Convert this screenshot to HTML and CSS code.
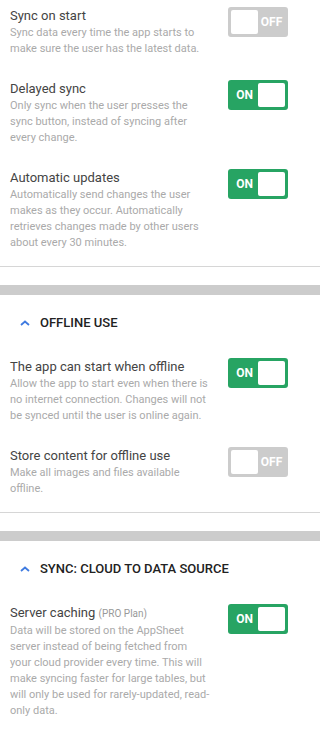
FILE: index.html
```html
<html>

<head>
    <link rel="stylesheet" href="styles.css">
</head>

<body>
    <div class="section first">
        <div class="setting">
            <div class="info">
                <div class="title">Sync on start</div>
                <div class="desc">Sync data every time the app starts to make sure the user has the latest data.</div>
            </div>
            <div class="toggle off"><span class="knob"></span><span class="label">OFF</span></div>
        </div>
        <div class="setting">
            <div class="info">
                <div class="title">Delayed sync</div>
                <div class="desc">Only sync when the user presses the sync button, instead of syncing after every change.</div>
            </div>
            <div class="toggle on"><span class="label">ON</span><span class="knob"></span></div>
        </div>
        <div class="setting">
            <div class="info">
                <div class="title">Automatic updates</div>
                <div class="desc">Automatically send changes the user makes as they occur. Automatically retrieves changes made by other users about every 30 minutes.</div>
            </div>
            <div class="toggle on"><span class="label">ON</span><span class="knob"></span></div>
        </div>
    </div>

    <div class="section">
        <div class="header">
            <svg class="chevron" width="10" height="6" viewBox="0 0 10 6"><path d="M1 5 L5 1.5 L9 5" fill="none" stroke="#3f7be0" stroke-width="1.8"/></svg>
            OFFLINE USE
        </div>
        <div class="setting">
            <div class="info">
                <div class="title">The app can start when offline</div>
                <div class="desc">Allow the app to start even when there is no internet connection. Changes will not be synced until the user is online again.</div>
            </div>
            <div class="toggle on"><span class="label">ON</span><span class="knob"></span></div>
        </div>
        <div class="setting">
            <div class="info">
                <div class="title">Store content for offline use</div>
                <div class="desc">Make all images and files available offline.</div>
            </div>
            <div class="toggle off"><span class="knob"></span><span class="label">OFF</span></div>
        </div>
    </div>

    <div class="section last">
        <div class="header">
            <svg class="chevron" width="10" height="6" viewBox="0 0 10 6"><path d="M1 5 L5 1.5 L9 5" fill="none" stroke="#3f7be0" stroke-width="1.8"/></svg>
            SYNC: CLOUD TO DATA SOURCE
        </div>
        <div class="setting">
            <div class="info">
                <div class="title">Server caching <span class="plan">(PRO Plan)</span></div>
                <div class="desc">Data will be stored on the AppSheet server instead of being fetched from your cloud provider every time. This will make syncing faster for large tables, but will only be used for rarely-updated, read-only data.</div>
            </div>
            <div class="toggle on"><span class="label">ON</span><span class="knob"></span></div>
        </div>
    </div>
</body>

</html>
```

FILE: styles.css
```css
body {
    margin: 0;
    font-family: Roboto, "Noto Sans", sans-serif;
    background-color: #ffffff;
}

.section {
    border-top: 10px solid #cccccc;
    border-bottom: 1px solid #d6d6d6;
    margin-bottom: 18px;
}

.section.first {
    border-top: none;
}

.section.last {
    border-bottom: none;
}

.header {
    display: flex;
    align-items: center;
    padding: 18px 0 20px 20px;
    height: 18px;
    font-size: 13px;
    font-weight: 500;
    color: #222222;
}

.chevron {
    margin-right: 10px;
    margin-top: 1px;
}

.setting {
    display: flex;
    align-items: flex-start;
    padding: 7px 0 16px 10px;
}

.setting:last-child {
    padding-bottom: 15px;
}

.info {
    width: 200px;
    margin-right: 18px;
}

.title {
    font-size: 13px;
    line-height: 18px;
    color: #444444;
}

.plan {
    font-size: 10px;
    color: #999999;
}

.desc {
    font-size: 11px;
    line-height: 16px;
    color: #aaaaaa;
}

.toggle {
    display: flex;
    align-items: center;
    width: 60px;
    height: 30px;
    padding: 3px;
    box-sizing: border-box;
    border-radius: 3px;
    flex-shrink: 0;
}

.toggle.on {
    background-color: #27a463;
}

.toggle.off {
    background-color: #cccccc;
}

.knob {
    width: 27px;
    height: 24px;
    border-radius: 2px;
    background-color: #ffffff;
}

.label {
    flex: 1;
    text-align: center;
    font-size: 12px;
    font-weight: 700;
    color: #ffffff;
}
```
